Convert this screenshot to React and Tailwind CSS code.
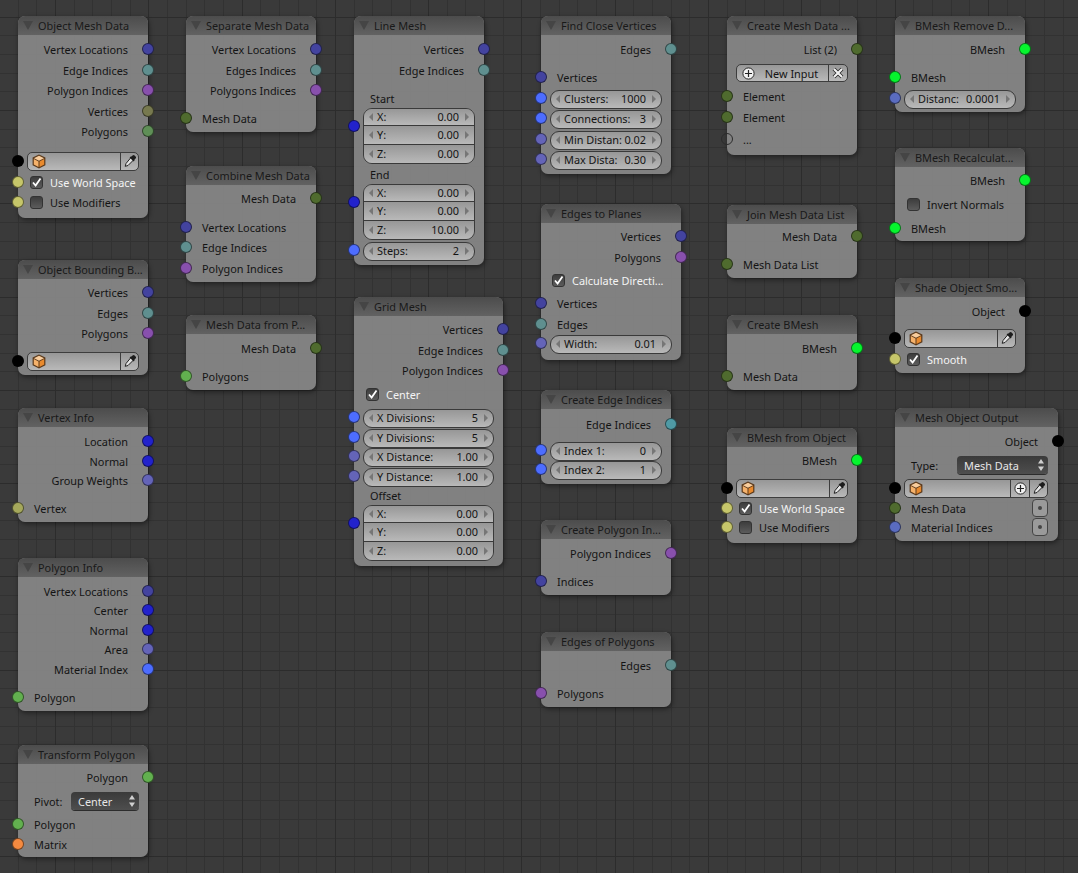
import React from 'react'

const C = {
  vecList: 'bg-[#43439f]',
  edgeList: 'bg-[#5f8f8f]',
  polyIdx: 'bg-[#8850ad]',
  vertList: 'bg-[#77794f]',
  polyList: 'bg-[#5f8f57]',
  vec: 'bg-[#2222cc]',
  float: 'bg-[#4d6dff]',
  floatDim: 'bg-[#6464b8]',
  bool: 'bg-[#c6c66a]',
  obj: 'bg-black',
  mesh: 'bg-[#4f6b2e]',
  poly: 'bg-[#62b04f]',
  vertex: 'bg-[#a5a85c]',
  matrix: 'bg-[#f58a40]',
  bmesh: 'bg-[#06f52e]',
  listDim: 'bg-[#5a6cc0]',
  none: 'bg-transparent',
}

// margin between two rows, picked from the free space in pixels
const GAP = {
  '-3': '-mt-[3px]', '-2': '-mt-[2px]', '-1': '-mt-px', 0: 'mt-0', 1: 'mt-px', 2: 'mt-[2px]', 3: 'mt-[3px]', 4: 'mt-[4px]', 5: 'mt-[5px]',
  6: 'mt-[6px]', 7: 'mt-[7px]', 8: 'mt-[8px]', 9: 'mt-[9px]', 10: 'mt-[10px]', 11: 'mt-[11px]', 12: 'mt-[12px]',
}

const GROUP_ROWS = ['h-[17px]', 'h-[19px]', 'h-[18px]']

const nodes = [
  { title: 'Object Mesh Data', pos: 'left-[18px] top-[16px] w-[130px] h-[202px]', rows: [
    { t: 'out', y: 49, label: 'Vertex Locations', c: C.vecList },
    { t: 'out', y: 70, label: 'Edge Indices', c: C.edgeList },
    { t: 'out', y: 90, label: 'Polygon Indices', c: C.polyIdx },
    { t: 'out', y: 111, label: 'Vertices', c: C.vertList },
    { t: 'out', y: 131, label: 'Polygons', c: C.polyList },
    { t: 'object', y: 161, c: C.obj },
    { t: 'check', y: 182, label: 'Use World Space', on: true, c: C.bool },
    { t: 'check', y: 202, label: 'Use Modifiers', c: C.bool },
  ] },
  { title: 'Object Bounding B...', pos: 'left-[18px] top-[260px] w-[130px] h-[115px]', rows: [
    { t: 'out', y: 292, label: 'Vertices', c: C.vecList },
    { t: 'out', y: 313, label: 'Edges', c: C.edgeList },
    { t: 'out', y: 333, label: 'Polygons', c: C.polyIdx },
    { t: 'object', y: 361, c: C.obj },
  ] },
  { title: 'Vertex Info', pos: 'left-[18px] top-[408px] w-[130px] h-[114px]', rows: [
    { t: 'out', y: 441, label: 'Location', c: C.vec },
    { t: 'out', y: 461, label: 'Normal', c: C.vec },
    { t: 'out', y: 480, label: 'Group Weights', c: C.floatDim },
    { t: 'in', y: 508, label: 'Vertex', c: C.vertex },
  ] },
  { title: 'Polygon Info', pos: 'left-[18px] top-[558px] w-[130px] h-[153px]', rows: [
    { t: 'out', y: 591, label: 'Vertex Locations', c: C.vecList },
    { t: 'out', y: 610, label: 'Center', c: C.vec },
    { t: 'out', y: 630, label: 'Normal', c: C.vec },
    { t: 'out', y: 649, label: 'Area', c: C.floatDim },
    { t: 'out', y: 669, label: 'Material Index', c: C.float },
    { t: 'in', y: 697, label: 'Polygon', c: C.poly },
  ] },
  { title: 'Transform Polygon', pos: 'left-[18px] top-[745px] w-[130px] h-[112px]', rows: [
    { t: 'out', y: 777, label: 'Polygon', c: C.poly },
    { t: 'select', y: 801, label: 'Pivot:', value: 'Center', w: 'w-[68px]', pr: 'pr-[9px]' },
    { t: 'in', y: 824, label: 'Polygon', c: C.poly },
    { t: 'in', y: 844, label: 'Matrix', c: C.matrix },
  ] },

  { title: 'Separate Mesh Data', pos: 'left-[186px] top-[16px] w-[130px] h-[116px]', rows: [
    { t: 'out', y: 49, label: 'Vertex Locations', c: C.vecList },
    { t: 'out', y: 70, label: 'Edges Indices', c: C.edgeList },
    { t: 'out', y: 90, label: 'Polygons Indices', c: C.polyIdx },
    { t: 'in', y: 118, label: 'Mesh Data', c: C.mesh },
  ] },
  { title: 'Combine Mesh Data', pos: 'left-[186px] top-[166px] w-[130px] h-[116px]', rows: [
    { t: 'out', y: 198, label: 'Mesh Data', c: C.mesh },
    { t: 'in', y: 227, label: 'Vertex Locations', c: C.vecList },
    { t: 'in', y: 247, label: 'Edge Indices', c: C.edgeList },
    { t: 'in', y: 268, label: 'Polygon Indices', c: C.polyIdx },
  ] },
  { title: 'Mesh Data from P...', pos: 'left-[186px] top-[315px] w-[130px] h-[75px]', rows: [
    { t: 'out', y: 348, label: 'Mesh Data', c: C.mesh },
    { t: 'in', y: 376, label: 'Polygons', c: C.poly },
  ] },

  { title: 'Line Mesh', pos: 'left-[354px] top-[16px] w-[130px] h-[249px]', rows: [
    { t: 'out', y: 49, label: 'Vertices', c: C.vecList },
    { t: 'out', y: 70, label: 'Edge Indices', c: C.edgeList },
    { t: 'text', y: 98, label: 'Start' },
    { t: 'group', y: 136, c: C.vec, items: [['X:', '0.00'], ['Y:', '0.00'], ['Z:', '0.00']] },
    { t: 'text', y: 174, label: 'End' },
    { t: 'group', y: 212, c: C.vec, items: [['X:', '0.00'], ['Y:', '0.00'], ['Z:', '10.00']] },
    { t: 'num', y: 251, label: 'Steps:', value: '2', c: C.float },
  ] },
  { title: 'Grid Mesh', pos: 'left-[354px] top-[297px] w-[149px] h-[269px]', rows: [
    { t: 'out', y: 329, label: 'Vertices', c: C.vecList },
    { t: 'out', y: 350, label: 'Edge Indices', c: C.edgeList },
    { t: 'out', y: 370, label: 'Polygon Indices', c: C.polyIdx },
    { t: 'check', y: 394, label: 'Center', on: true },
    { t: 'num', y: 418, label: 'X Divisions:', value: '5', c: C.float },
    { t: 'num', y: 438, label: 'Y Divisions:', value: '5', c: C.float },
    { t: 'num', y: 457, label: 'X Distance:', value: '1.00', c: C.floatDim },
    { t: 'num', y: 477, label: 'Y Distance:', value: '1.00', c: C.floatDim },
    { t: 'text', y: 495, label: 'Offset' },
    { t: 'group', y: 533, c: C.vec, items: [['X:', '0.00'], ['Y:', '0.00'], ['Z:', '0.00']] },
  ] },

  { title: 'Find Close Vertices', pos: 'left-[541px] top-[16px] w-[130px] h-[158px]', rows: [
    { t: 'out', y: 49, label: 'Edges', c: C.edgeList },
    { t: 'in', y: 77, label: 'Vertices', c: C.vecList },
    { t: 'num', y: 99, label: 'Clusters:', value: '1000', c: C.float },
    { t: 'num', y: 119, label: 'Connections:', value: '3', c: C.float },
    { t: 'num', y: 140, label: 'Min Distan:', value: '0.02', c: C.floatDim },
    { t: 'num', y: 160, label: 'Max Dista:', value: '0.30', c: C.floatDim },
  ] },
  { title: 'Edges to Planes', pos: 'left-[541px] top-[204px] w-[140px] h-[156px]', rows: [
    { t: 'out', y: 236, label: 'Vertices', c: C.vecList },
    { t: 'out', y: 257, label: 'Polygons', c: C.polyIdx },
    { t: 'check', y: 280, label: 'Calculate Directi...', on: true, inset: true },
    { t: 'in', y: 303, label: 'Vertices', c: C.vecList },
    { t: 'in', y: 324, label: 'Edges', c: C.edgeList },
    { t: 'num', y: 344, label: 'Width:', value: '0.01', c: C.floatDim },
  ] },
  { title: 'Create Edge Indices', pos: 'left-[541px] top-[390px] w-[130px] h-[94px]', rows: [
    { t: 'out', y: 424, label: 'Edge Indices', c: 'bg-[#4f9aa5]' },
    { t: 'num', y: 451, label: 'Index 1:', value: '0', c: C.float },
    { t: 'num', y: 470, label: 'Index 2:', value: '1', c: C.float },
  ] },
  { title: 'Create Polygon In...', pos: 'left-[541px] top-[520px] w-[130px] h-[75px]', rows: [
    { t: 'out', y: 553, label: 'Polygon Indices', c: C.polyIdx },
    { t: 'in', y: 581, label: 'Indices', c: C.vecList },
  ] },
  { title: 'Edges of Polygons', pos: 'left-[541px] top-[632px] w-[130px] h-[75px]', rows: [
    { t: 'out', y: 665, label: 'Edges', c: C.edgeList },
    { t: 'in', y: 693, label: 'Polygons', c: C.polyIdx },
  ] },

  { title: 'Create Mesh Data ...', pos: 'left-[727px] top-[16px] w-[130px] h-[139px]', rows: [
    { t: 'out', y: 49, label: 'List (2)', c: C.mesh },
    { t: 'newInput', y: 73 },
    { t: 'in', y: 96, label: 'Element', c: C.mesh },
    { t: 'in', y: 117, label: 'Element', c: C.mesh },
    { t: 'in', y: 139, label: '...', c: C.none, hollow: true },
  ] },
  { title: 'Join Mesh Data List', pos: 'left-[727px] top-[205px] w-[130px] h-[73px]', rows: [
    { t: 'out', y: 236, label: 'Mesh Data', c: C.mesh },
    { t: 'in', y: 264, label: 'Mesh Data List', c: C.mesh },
  ] },
  { title: 'Create BMesh', pos: 'left-[727px] top-[315px] w-[130px] h-[75px]', rows: [
    { t: 'out', y: 348, label: 'BMesh', c: C.bmesh },
    { t: 'in', y: 376, label: 'Mesh Data', c: C.mesh },
  ] },
  { title: 'BMesh from Object', pos: 'left-[727px] top-[428px] w-[130px] h-[115px]', rows: [
    { t: 'out', y: 460, label: 'BMesh', c: C.bmesh },
    { t: 'object', y: 488, c: C.obj },
    { t: 'check', y: 508, label: 'Use World Space', on: true, c: C.bool },
    { t: 'check', y: 527, label: 'Use Modifiers', c: C.bool },
  ] },

  { title: 'BMesh Remove D...', pos: 'left-[895px] top-[16px] w-[130px] h-[96px]', rows: [
    { t: 'out', y: 49, label: 'BMesh', c: C.bmesh },
    { t: 'in', y: 77, label: 'BMesh', c: C.bmesh },
    { t: 'num', y: 99, label: 'Distanc:', value: '0.0001', c: C.listDim },
  ] },
  { title: 'BMesh Recalculat...', pos: 'left-[895px] top-[148px] w-[130px] h-[93px]', rows: [
    { t: 'out', y: 180, label: 'BMesh', c: C.bmesh },
    { t: 'check', y: 204, label: 'Invert Normals' },
    { t: 'in', y: 228, label: 'BMesh', c: C.bmesh },
  ] },
  { title: 'Shade Object Smo...', pos: 'left-[895px] top-[278px] w-[130px] h-[95px]', rows: [
    { t: 'out', y: 311, label: 'Object', c: C.obj },
    { t: 'object', y: 338, c: C.obj },
    { t: 'check', y: 359, label: 'Smooth', on: true, c: C.bool },
  ] },
  { title: 'Mesh Object Output', pos: 'left-[895px] top-[408px] w-[163px] h-[133px]', rows: [
    { t: 'out', y: 441, label: 'Object', c: C.obj },
    { t: 'select', y: 465, label: 'Type:', value: 'Mesh Data', w: 'w-[91px]', pr: 'pr-[10px]' },
    { t: 'object', y: 488, c: C.obj, plus: true },
    { t: 'inPin', y: 508, label: 'Mesh Data', c: C.mesh },
    { t: 'inPin', y: 527, label: 'Material Indices', c: C.listDim },
  ] },
]

const FIELD = 'bg-gradient-to-b from-[#979797] to-[#b9b9b9]'

function Socket({ c, side, hollow, className = 'top-1/2 -translate-y-1/2' }) {
  const sideClass = side === 'left' ? '-left-[6px]' : '-right-[6px]'
  const ring = hollow ? 'border-[#2c2c2c]' : 'border-black/50'
  return <span className={`absolute h-[12px] w-[12px] rounded-full border ${ring} ${c} ${sideClass} ${className}`} />
}

function Arrow({ dir }) {
  return (
    <svg width="4" height="8" viewBox="0 0 4 8" className="shrink-0">
      <path d={dir === 'left' ? 'M4 0L0 4l4 4z' : 'M0 0l4 4-4 4z'} fill="#767676" />
    </svg>
  )
}

function CubeIcon() {
  return (
    <svg width="14" height="15" viewBox="0 0 14 15" className="shrink-0">
      <path d="M7 .5L13.4 3.6V11.2L7 14.5 .6 11.2V3.6z" fill="#5b3a1c" />
      <path d="M7 1.8L12 4.2 7 6.8 2 4.2z" fill="#f9cd9c" />
      <path d="M1.8 5L6.5 7.5V13L1.8 10.6z" fill="#f6b26b" />
      <path d="M7.5 7.5L12.2 5V10.6L7.5 13z" fill="#e98a2d" />
    </svg>
  )
}

function DropperIcon() {
  return (
    <svg width="14" height="14" viewBox="0 0 14 14">
      <path d="M8 3.5L10.5 6 5 11.5l-2.8.8.8-2.8z" fill="#e4e4e4" stroke="#222" strokeWidth="1" />
      <path d="M8 2.8L9.6 1.4a1.4 1.4 0 012 0l1 1a1.4 1.4 0 010 2L11.2 6l.4.6-1 .9L6.6 3.6l1-1z" fill="#1c1c1c" />
    </svg>
  )
}

function PlusCircle() {
  return (
    <svg width="13" height="13" viewBox="0 0 13 13" className="shrink-0">
      <circle cx="6.5" cy="6.5" r="5.6" fill="#f2f2f2" stroke="#2a2a2a" strokeWidth="1" />
      <path d="M6.5 3v7M3 6.5h7" stroke="#222" strokeWidth="1.2" />
    </svg>
  )
}

function ObjectField({ plus }) {
  return (
    <div className={`flex h-[19px] w-full overflow-hidden rounded-[5px] border border-[#3d3d3d] ${FIELD}`}>
      <div className="flex min-w-0 flex-1 items-center pl-[4px]"><CubeIcon /></div>
      {plus && (
        <div className="flex w-[19px] items-center justify-center border-l border-[#3d3d3d]"><PlusCircle /></div>
      )}
      <div className="flex w-[18px] items-center justify-center border-l border-[#3d3d3d]"><DropperIcon /></div>
    </div>
  )
}

function NumField({ label, value, rounded = 'rounded-[9px] border', h = 'h-[19px]' }) {
  return (
    <div className={`flex w-full items-center border-[#3a3a3a] px-[5px] ${FIELD} ${rounded} ${h}`}>
      <Arrow dir="left" />
      <span className="ml-[4px] whitespace-nowrap">{label}</span>
      <span className="ml-auto mr-[6px] whitespace-nowrap">{value}</span>
      <Arrow dir="right" />
    </div>
  )
}

function Row({ row }) {
  const { t, label, c } = row
  if (t === 'out') {
    return (
      <div className="relative flex h-full items-center justify-end pr-[20px]">
        <span className="translate-y-px whitespace-nowrap">{label}</span>
        <Socket c={c} side="right" />
      </div>
    )
  }
  if (t === 'in') {
    return (
      <div className="relative flex h-full items-center pl-[16px]">
        <span className="translate-y-px whitespace-nowrap">{label}</span>
        <Socket c={c} side="left" hollow={row.hollow} />
      </div>
    )
  }
  if (t === 'inPin') {
    return (
      <div className="relative flex h-full items-center justify-between pl-[16px] pr-[10px]">
        <span className="translate-y-px whitespace-nowrap">{label}</span>
        <span className="flex h-[18px] w-[16px] items-center justify-center rounded-[4px] border border-[#444] bg-[#9a9a9a]">
          <span className="h-[4px] w-[4px] rounded-full bg-[#444]" />
        </span>
        <Socket c={c} side="left" />
      </div>
    )
  }
  if (t === 'text') {
    return <div className="flex h-full items-center pl-[16px]"><span className="translate-y-px">{label}</span></div>
  }
  if (t === 'object') {
    return (
      <div className={`relative flex h-full items-center pl-[9px] ${row.plus ? 'pr-[10px]' : 'pr-[9px]'}`}>
        <ObjectField plus={row.plus} />
        <Socket c={c} side="left" />
      </div>
    )
  }
  if (t === 'check') {
    return (
      <div className={`relative flex h-full items-center gap-[7px] ${row.inset ? 'pl-[11px]' : 'pl-[12px]'}`}>
        <span className="flex h-[13px] w-[13px] shrink-0 items-center justify-center rounded-[3px] border border-[#333] bg-gradient-to-b from-[#3d3d3d] to-[#5c5c5c]">
          {row.on && (
            <svg width="11" height="11" viewBox="0 0 11 11">
              <path d="M2 5.5L4.6 8.5 9.5 1.5" fill="none" stroke="#fff" strokeWidth="1.8" />
            </svg>
          )}
        </span>
        <span className={`translate-y-px whitespace-nowrap ${row.on ? 'text-[#f4f4f4]' : ''}`}>{label}</span>
        {c && <Socket c={c} side="left" />}
      </div>
    )
  }
  if (t === 'num') {
    return (
      <div className="relative flex h-full items-center px-[9px]">
        <NumField label={label} value={row.value} />
        <Socket c={c} side="left" className="top-[3px]" />
      </div>
    )
  }
  if (t === 'group') {
    return (
      <div className="relative flex h-full items-center px-[9px]">
        <div className="w-full divide-y divide-[#333] overflow-hidden rounded-[9px] border border-[#3a3a3a]">
          {row.items.map(([l, v], i) => (
            <NumField key={l} label={l} value={v} rounded="rounded-none" h={GROUP_ROWS[i]} />
          ))}
        </div>
        <Socket c={c} side="left" className="top-[12px]" />
      </div>
    )
  }
  if (t === 'select') {
    return (
      <div className={`flex h-full items-center justify-between pl-[16px] ${row.pr}`}>
        <span className="translate-y-px">{label}</span>
        <div className={`flex h-[18px] items-center justify-between rounded-[4px] bg-gradient-to-b from-[#3a3a3a] to-[#4e4e4e] pl-[7px] pr-[4px] text-[#e6e6e6] shadow-[0_1px_0_#2c2c2c] ${row.w}`}>
          <span className="translate-y-px">{row.value}</span>
          <svg width="6" height="12" viewBox="0 0 6 12">
            <path d="M3 0l3 4.5H0zM3 12L0 7.5h6z" fill="#cfcfcf" />
          </svg>
        </div>
      </div>
    )
  }
  if (t === 'newInput') {
    return (
      <div className="flex h-full items-center px-[9px]">
        <div className={`flex h-[18px] w-full overflow-hidden rounded-[5px] border border-[#3d3d3d] ${FIELD}`}>
          <div className="flex flex-1 items-center pl-[5px]">
            <PlusCircle />
            <span className="flex-1 translate-y-px text-center">New Input</span>
          </div>
          <div className="flex w-[19px] items-center justify-center border-l border-[#3d3d3d]">
            <svg width="12" height="12" viewBox="0 0 12 12">
              <path d="M2 2l8 8M10 2l-8 8" stroke="#222" strokeWidth="3.8" />
              <path d="M2 2l8 8M10 2l-8 8" stroke="#f2f2f2" strokeWidth="2.2" />
            </svg>
          </div>
        </div>
      </div>
    )
  }
  return null
}

const rowHeight = (r) => (r.t === 'group' ? 56 : 20)

function NodeBox({ node }) {
  const top = parseInt(node.pos.match(/top-\[(\d+)px\]/)[1], 10)
  let cursor = top + 19
  return (
    <div className={`absolute rounded-[7px] bg-[#858585]/95 text-[10.9px] leading-none text-[#141414] shadow-[1px_2px_5px_rgba(0,0,0,0.45)] ${node.pos}`}>
      <div className="flex h-[19px] items-center gap-[5px] rounded-t-[7px] bg-gradient-to-b from-[#4c4c4c] to-[#626262] pl-[5px] text-[#191919]">
        <svg width="10" height="9" viewBox="0 0 10 9" className="shrink-0">
          <path d="M0 0h10L5 9z" fill="#454545" />
        </svg>
        <span className="translate-y-px whitespace-nowrap">{node.title}</span>
      </div>
      {node.rows.map((r, i) => {
        const h = rowHeight(r)
        const gap = Math.round(r.y - h / 2 - cursor)
        cursor += gap + h
        return (
          <div key={i} className={`${h === 56 ? 'h-[56px]' : 'h-[20px]'} ${GAP[gap] ?? 'mt-0'}`}>
            <Row row={r} />
          </div>
        )
      })}
    </div>
  )
}

export default function App() {
  return (
    <div className="relative h-[873px] w-[1078px] overflow-hidden bg-[#3a3a3a] font-['Noto_Sans',sans-serif]">
      <div className="absolute -left-[0.66px] -top-[2.36px] bottom-0 right-0 bg-[image:repeating-linear-gradient(90deg,transparent_0_55.98px,#2c2c2c_55.98px_56.98px,transparent_56.98px_93.3px),repeating-linear-gradient(180deg,transparent_0_18.66px,#2c2c2c_18.66px_19.66px,transparent_19.66px_93.3px),repeating-linear-gradient(90deg,#323232_0_1px,transparent_1px_18.66px),repeating-linear-gradient(180deg,#323232_0_1px,transparent_1px_18.66px)]" />
      {nodes.map((n) => (
        <NodeBox key={n.title} node={n} />
      ))}
    </div>
  )
}
